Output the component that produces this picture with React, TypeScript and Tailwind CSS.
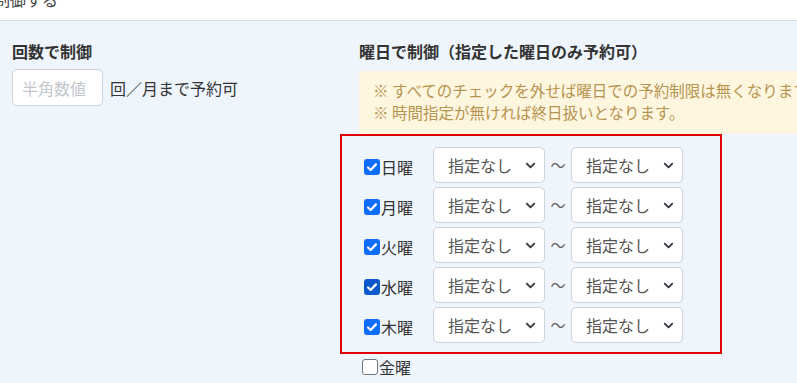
import { ChevronDown } from "lucide-react";

const days = [
  { name: "日曜", checked: true },
  { name: "月曜", checked: true },
  { name: "火曜", checked: true },
  { name: "水曜", checked: true, dark: true },
  { name: "木曜", checked: true },
];

function Check({ checked, dark }: { checked: boolean; dark?: boolean }) {
  if (!checked)
    return (
      <span className="inline-block w-[16px] h-[16px] rounded-[3px] border border-[#6c757d] bg-white" />
    );
  return (
    <span
      className={`inline-flex items-center justify-center w-[16px] h-[16px] rounded-[3px] ${
        dark ? "bg-[#0a58ca]" : "bg-[#0d6efd]"
      }`}
    >
      <svg viewBox="0 0 16 16" className="w-[14px] h-[14px]">
        <path
          d="M3.5 8.5l3 3 6-6.5"
          fill="none"
          stroke="#fff"
          strokeWidth="2.6"
          strokeLinecap="round"
          strokeLinejoin="round"
        />
      </svg>
    </span>
  );
}

function Select() {
  return (
    <div className="flex items-center justify-between w-[112px] h-[36px] rounded-[5px] border border-[#ced4da] bg-white pl-[14px] pr-[6px] text-[16px] text-[#555]">
      <span>指定なし</span>
      <ChevronDown className="w-[15px] h-[15px] text-[#343a40]" strokeWidth={3} />
    </div>
  );
}

export default function App() {
  return (
    <div
      className="w-[797px] h-[383px] overflow-hidden bg-white text-[#333]"
      style={{ fontFamily: '"Noto Sans CJK JP", "Noto Sans", sans-serif' }}
    >
      <div className="h-[21px] border-b border-[#d6dde4] relative">
        <span className="absolute left-[-6px] top-[-13px] text-[16px] text-[#444]">
          制御する
        </span>
      </div>
      <div className="bg-[#eff5fd] h-full flex pt-[19px]">
        <div className="w-[359px] pl-[12px]">
          <div className="text-[16px] font-bold leading-[22px] text-[#333]">
            回数で制御
          </div>
          <div className="flex items-center mt-[7px]">
            <div className="w-[91px] h-[37px] rounded-[5px] border border-[#ced4da] bg-white pl-[9px] flex items-center overflow-hidden">
              <span className="text-[16px] text-[#c2c7cc] whitespace-nowrap">半角数値</span>
            </div>
            <span className="ml-[7px] text-[16px] text-[#333]">回／月まで予約可</span>
          </div>
        </div>
        <div className="flex-1 min-w-0">
          <div className="text-[16px] font-bold leading-[22px] text-[#333]">
            曜日で制御（指定した曜日のみ予約可）
          </div>
          <div className="mt-[9px] h-[63px] bg-[#fff6e0] rounded-l-[4px] pl-[14px] pt-[8px] text-[15.5px] leading-[22px] text-[#b5944f] whitespace-nowrap overflow-hidden">
            <div>※ すべてのチェックを外せば曜日での予約制限は無くなります。</div>
            <div>※ 時間指定が無ければ終日扱いとなります。</div>
          </div>
          <div className="-ml-[19px] w-[382px] border-2 border-[#e00000] pt-[11px] pb-[9px] flex flex-col gap-[4px]">
            {days.map((d) => (
              <div key={d.name} className="flex items-center h-[36px]">
                <div className="w-[91px] pl-[22px] flex items-center gap-[1px] pt-[3px]">
                  <Check checked={d.checked} dark={d.dark} />
                  <span className="text-[16px] text-[#333]">{d.name}</span>
                </div>
                <Select />
                <span className="w-[26px] text-center text-[15px] text-[#666]">〜</span>
                <Select />
              </div>
            ))}
          </div>
          <div className="flex items-center gap-[1px] pl-[3px] mt-[1px]">
            <Check checked={false} />
            <span className="text-[16px] text-[#333]">金曜</span>
          </div>
        </div>
      </div>
    </div>
  );
}
